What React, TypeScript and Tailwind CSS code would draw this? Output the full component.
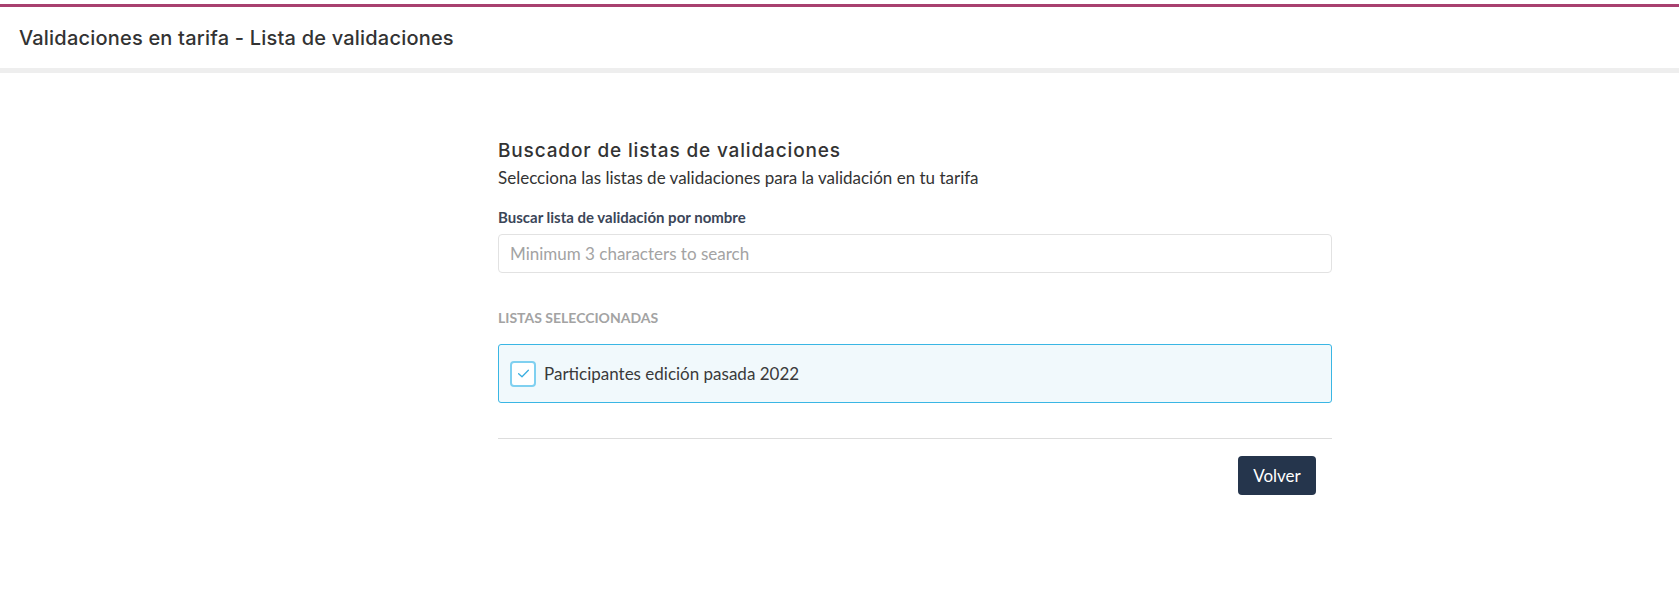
import React from "react";

export default function App() {
  return (
    <div className="min-h-screen w-full bg-white" style={{ fontFamily: "Lato, 'Noto Sans', sans-serif" }}>
      <div className="h-[4px] bg-white" />
      <div className="h-[3px] bg-[#a8406f]" />
      <header className="flex h-[61px] items-center px-[19px]">
        <h1 className="text-[20px] font-medium tracking-[0.01em] text-[#333333]" style={{ fontFamily: "Inter, 'Noto Sans', sans-serif" }}>
          Validaciones en tarifa - Lista de validaciones
        </h1>
      </header>
      <div className="h-[5px] bg-[#eeeeee]" />

      <main className="flex pl-[498px]">
        <div className="w-[834px] pt-[66px]">
          <h2 className="text-[19px] leading-[24px] font-medium tracking-[0.045em] text-[#333333]" style={{ fontFamily: "Inter, 'Noto Sans', sans-serif" }}>
            Buscador de listas de validaciones
          </h2>
          <p className="mt-[4px] text-[17px] leading-[22px] text-[#333333]">
            Selecciona las listas de validaciones para la validación en tu tarifa
          </p>

          <label className="mt-[19px] block text-[15px] font-bold leading-[18px] text-[#3b4658]">
            Buscar lista de validación por nombre
          </label>
          <input
            type="text"
            placeholder="Minimum 3 characters to search"
            className="mt-[8px] block h-[39px] w-full rounded-[4px] border border-[#e2e2e2] px-[11px] text-[17px] text-[#333] placeholder:text-[#a3a3a3] outline-none"
          />

          <div className="mt-[37px] text-[14px] font-bold leading-[16px] text-[#a3a3a3]">LISTAS SELECCIONADAS</div>

          <div className="mt-[18px] flex h-[59px] items-center rounded-[3px] border border-[#3ab6e4] bg-[#f1f9fc] pl-[11px]">
            <span className="flex h-[26px] w-[26px] items-center justify-center rounded-[4px] border-2 border-[#7fd0f0] bg-white">
              <svg width="13" height="11" viewBox="0 0 12 10" fill="none">
                <path d="M1.5 5.2 L4.6 8 L10.5 2" stroke="#3aaee0" strokeWidth="1.2" strokeLinecap="round" strokeLinejoin="round" />
              </svg>
            </span>
            <span className="ml-[8px] text-[17px] text-[#3a3a3a]">Participantes edición pasada 2022</span>
          </div>

          <div className="mt-[35px] h-px bg-[#dddddd]" />

          <div className="flex justify-end pr-[16px] pt-[17px]">
            <button className="h-[39px] w-[78px] rounded-[4px] bg-[#25354c] text-[17px] text-white">Volver</button>
          </div>
        </div>
      </main>
    </div>
  );
}
